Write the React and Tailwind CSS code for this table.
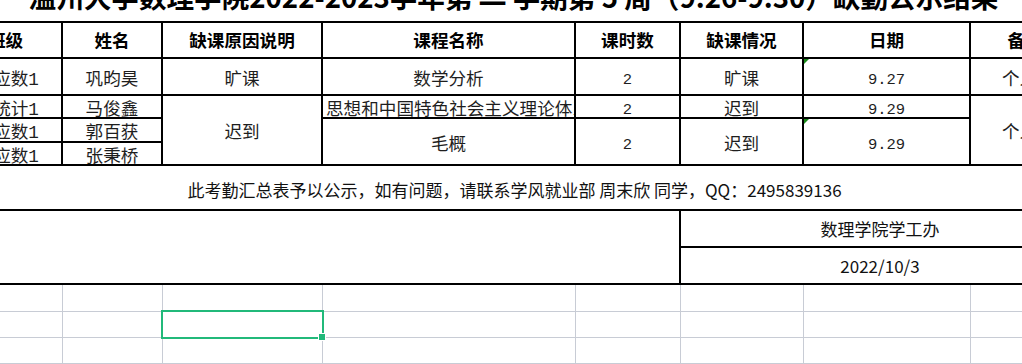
const head = ['班级', '姓名', '缺课原因说明', '课程名称', '课时数', '缺课情况', '日期', '备注']
const widths = [113, 100, 160, 253, 105, 123, 167, 110]

const cell = 'border-2 border-black p-0 text-center align-middle whitespace-nowrap overflow-hidden'
const body = "font-['Liberation_Mono','Noto_Sans_CJK_SC',monospace] text-[17.6px] leading-[14px] text-[#1e1e1e]"
const num = "font-['Liberation_Mono','Noto_Sans_CJK_SC',monospace] text-[15.5px] leading-[14px] text-[#1e1e1e]"
const sans = "font-['Noto_Sans_CJK_SC',sans-serif] text-[17px] text-[#111]"
const grid = 'border border-[#c8ccd5] p-0'

// text sits a few pixels below the middle of its cell, as in the sheet
function T({ children }) {
  return <span className="inline-block pt-[6px] leading-[14px]">{children}</span>
}

// green "number stored as text" marker
function Flag() {
  return (
    <span className="absolute left-0 top-0 w-0 h-0 border-t-[5px] border-r-[5px] border-t-[#1a8a1a] border-r-transparent" />
  )
}

export default function App() {
  return (
    <div className="w-[1022px] h-[364px] overflow-hidden bg-white">
      <div className="ml-[-52px] w-[1131px]">
        <div className="h-[21px] overflow-hidden">
          <div className="-mt-[17px] text-center font-['Noto_Sans_CJK_SC',sans-serif] font-bold text-[27.6px] leading-[27px] text-black whitespace-nowrap">
            温州大学数理学院2022-2023学年第 <span className="align-[-6px]">一</span> 学期第 5 周（9.26-9.30）缺勤公示结果
          </div>
        </div>

        <table className="table-fixed border-collapse w-[1131px]">
          <colgroup>
            {widths.map((w, i) => (
              <col key={i} style={{ width: w }} />
            ))}
          </colgroup>
          <tbody>
            <tr className="h-[36px]">
              {head.map(h => (
                <td key={h} className={`${cell} font-['Noto_Sans_CJK_SC',sans-serif] font-bold text-[17.6px] text-black`}>
                  {h}
                </td>
              ))}
            </tr>

            <tr className="h-[37px]">
              <td className={`${cell} ${body}`}><T>21应数1</T></td>
              <td className={`${cell} ${body}`}><T>巩昀昊</T></td>
              <td className={`${cell} ${body}`}><T>旷课</T></td>
              <td className={`${cell} ${body}`}><T>数学分析</T></td>
              <td className={`${cell} ${num}`}><T>2</T></td>
              <td className={`${cell} ${body}`}><T>旷课</T></td>
              <td className={`${cell} ${num} relative`}><Flag /><T>9.27</T></td>
              <td className={`${cell} ${body} text-left pl-[31px]`}><T>个人原因</T></td>
            </tr>

            <tr className="h-[23px]">
              <td className={`${cell} ${body}`}><T>21统计1</T></td>
              <td className={`${cell} ${body}`}><T>马俊鑫</T></td>
              <td rowSpan={3} className={`${cell} ${body}`}><T>迟到</T></td>
              <td className={`${cell} ${body} text-left pl-[3px]`}><T>思想和中国特色社会主义理论体系概论</T></td>
              <td className={`${cell} ${num}`}><T>2</T></td>
              <td className={`${cell} ${body}`}><T>迟到</T></td>
              <td className={`${cell} ${num}`}><T>9.29</T></td>
              <td rowSpan={3} className={`${cell} ${body} text-left pl-[31px]`}><T>个人原因</T></td>
            </tr>

            <tr className="h-[24px]">
              <td className={`${cell} ${body}`}><T>21应数1</T></td>
              <td className={`${cell} ${body}`}><T>郭百获</T></td>
              <td rowSpan={2} className={`${cell} ${body}`}><T>毛概</T></td>
              <td rowSpan={2} className={`${cell} ${num}`}><T>2</T></td>
              <td rowSpan={2} className={`${cell} ${body}`}><T>迟到</T></td>
              <td rowSpan={2} className={`${cell} ${num} relative`}><Flag /><T>9.29</T></td>
            </tr>

            <tr className="h-[23px]">
              <td className={`${cell} ${body}`}><T>21应数1</T></td>
              <td className={`${cell} ${body}`}><T>张秉桥</T></td>
            </tr>

            <tr className="h-[45px]">
              <td colSpan={8} className={`${cell} ${sans} pt-[4px]`}>
                此考勤汇总表予以公示，如有问题，请联系学风就业部 周末欣 同学，QQ：2495839136
              </td>
            </tr>

            <tr className="h-[37px]">
              <td colSpan={5} rowSpan={2} className={cell} />
              <td colSpan={3} className={`${cell} ${sans}`}>数理学院学工办</td>
            </tr>
            <tr className="h-[37px]">
              <td colSpan={3} className={`${cell} ${sans}`}>2022/10/3</td>
            </tr>

            <tr className="h-[27px]">
              {widths.map((w, i) => <td key={i} className={grid} />)}
            </tr>
            <tr className="h-[26px]">
              {widths.map((w, i) => (
                <td key={i} className={`${grid} ${i === 2 ? 'relative' : ''}`}>
                  {i === 2 && (
                    <>
                      <span className="absolute -left-[2px] -top-[2px] -right-[2px] -bottom-[2px] border-2 border-[#21b97a]" />
                      <span className="absolute -right-[4px] -bottom-[4px] w-[8px] h-[8px] bg-[#21b97a] border border-white" />
                    </>
                  )}
                </td>
              ))}
            </tr>
            <tr className="h-[26px]">
              {widths.map((w, i) => <td key={i} className={grid} />)}
            </tr>
          </tbody>
        </table>
      </div>
    </div>
  )
}
